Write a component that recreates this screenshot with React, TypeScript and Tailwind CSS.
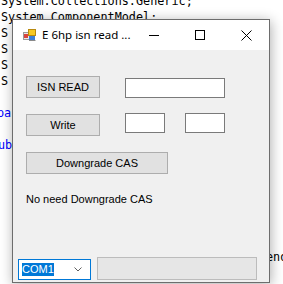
import React from "react";

function AppIcon() {
  return (
    <svg width="13" height="12" viewBox="0 0 13 12">
      <rect x="0.5" y="3.5" width="6" height="7" fill="#e8e8e8" stroke="#9a9a9a" />
      <rect x="1" y="5" width="4" height="4" fill="#d9443f" />
      <rect x="5.5" y="0.5" width="7" height="6" fill="#f6c924" stroke="#b88a10" />
      <rect x="6" y="7" width="6" height="4" fill="#3d7fd6" />
      <line x1="6" y1="11.5" x2="12.5" y2="11.5" stroke="#8a8a8a" />
    </svg>
  );
}

export default function App() {
  const code: { t: string; cls?: string }[] = [
    { t: "System.Collections.Generic;" },
    { t: "System.ComponentModel;" },
    { t: "S" },
    { t: "S" },
    { t: "S" },
    { t: "S" },
    { t: " " },
    { t: "pa", cls: "text-[#0000ff] ml-[-4px]" },
    { t: " " },
    { t: "ub", cls: "text-[#0000ff] ml-[-3px]" },
    { t: " " },
    { t: " " },
    { t: " " },
    { t: " " },
    { t: " " },
    { t: " " },
    { t: "end", cls: "ml-[265px]" },
  ];

  const btn =
    "flex items-center justify-center bg-[#e1e1e1] border border-[#adadad] text-black";
  const box = "bg-white border border-[#7a7a7a]";

  return (
    <div className="relative w-[283px] h-[284px] overflow-hidden bg-white">
      <div className="flex flex-col mt-[-7px] pl-[1px] font-['DejaVu_Sans_Mono',monospace] text-[11.8px] leading-[16px] text-black whitespace-pre">
        {code.map((l, i) => (
          <div key={i} className={l.cls ?? ""}>
            {l.t}
          </div>
        ))}
      </div>

      <div className="absolute left-[12px] top-[19px] w-[258px] h-[264px] flex flex-col border border-[#6d6d6d] bg-[#f0f0f0] shadow-[1px_2px_12px_rgba(0,0,0,0.32)]">
        <div className="h-[30px] shrink-0 bg-white flex items-center">
          <div className="ml-[10px] flex">
            <AppIcon />
          </div>
          <span className="ml-[6px] font-['Noto_Sans',sans-serif] text-[11.5px] text-black leading-none">
            E 6hp isn read ...
          </span>
          <div className="ml-auto flex h-full">
            <div className="w-[46px] h-full flex items-center justify-center">
              <svg width="10" height="10" viewBox="0 0 10 10">
                <line x1="0" y1="5.5" x2="10" y2="5.5" stroke="#000" strokeWidth="1" />
              </svg>
            </div>
            <div className="w-[46px] h-full flex items-center justify-center">
              <svg width="10" height="10" viewBox="0 0 10 10">
                <rect x="0.5" y="0.5" width="9" height="9" fill="none" stroke="#000" strokeWidth="1" />
              </svg>
            </div>
            <div className="w-[46px] h-full flex items-center justify-center">
              <svg width="11" height="11" viewBox="0 0 11 11">
                <line x1="0.5" y1="0.5" x2="10.5" y2="10.5" stroke="#000" strokeWidth="1" />
                <line x1="10.5" y1="0.5" x2="0.5" y2="10.5" stroke="#000" strokeWidth="1" />
              </svg>
            </div>
          </div>
        </div>

        <div className="flex-1 flex flex-col font-['Liberation_Sans',Arial,sans-serif] text-[11px] leading-[13px] text-black">
          <div className="flex items-start pl-[13px] pt-[26px]">
            <div className={`${btn} w-[74px] h-[22px]`}>ISN READ</div>
            <div className={`${box} ml-[25px] mt-[2px] w-[100px] h-[20px]`} />
          </div>
          <div className="flex items-start pl-[13px] mt-[16px]">
            <div className={`${btn} w-[74px] h-[22px]`}>Write</div>
            <div className={`${box} ml-[25px] mt-[-1px] w-[40px] h-[20px]`} />
            <div className={`${box} ml-[20px] mt-[-1px] w-[40px] h-[20px]`} />
          </div>
          <div className="flex pl-[13px] mt-[16px]">
            <div className={`${btn} w-[142px] h-[22px]`}>Downgrade CAS</div>
          </div>
          <div className="pl-[13px] mt-[19px]">No need Downgrade CAS</div>
          <div className="flex items-start pl-[5px] mt-[51px]">
            <div className="mt-[2px] w-[73px] h-[21px] bg-white border border-[#0078d7] flex items-center pl-[3px] pr-[8px]">
              <span className="bg-[#0078d7] text-white h-[13px] leading-[13px]">COM1</span>
              <svg className="ml-auto" width="8" height="5" viewBox="0 0 8 5">
                <polyline points="0.5,0.5 4,4 7.5,0.5" fill="none" stroke="#606060" strokeWidth="1" />
              </svg>
            </div>
            <div className="ml-[6px] w-[160px] h-[23px] bg-[#e6e6e6] border border-[#bcbcbc]" />
          </div>
        </div>
      </div>
    </div>
  );
}
